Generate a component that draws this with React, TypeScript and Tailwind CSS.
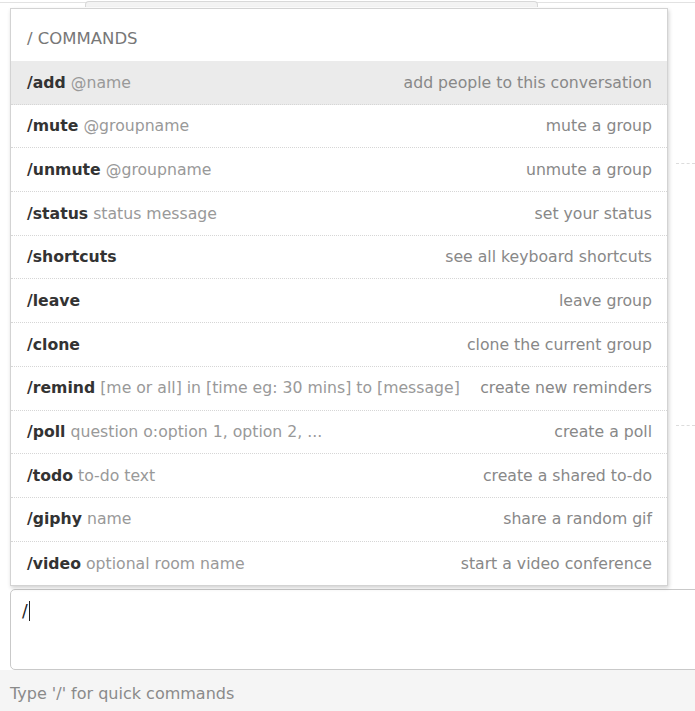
const COMMANDS: { name: string; args: string; desc: string }[] = [
  { name: "/add", args: "@name", desc: "add people to this conversation" },
  { name: "/mute", args: "@groupname", desc: "mute a group" },
  { name: "/unmute", args: "@groupname", desc: "unmute a group" },
  { name: "/status", args: "status message", desc: "set your status" },
  { name: "/shortcuts", args: "", desc: "see all keyboard shortcuts" },
  { name: "/leave", args: "", desc: "leave group" },
  { name: "/clone", args: "", desc: "clone the current group" },
  { name: "/remind", args: "[me or all] in [time eg: 30 mins] to [message]", desc: "create new reminders" },
  { name: "/poll", args: "question o:option 1, option 2, ...", desc: "create a poll" },
  { name: "/todo", args: "to-do text", desc: "create a shared to-do" },
  { name: "/giphy", args: "name", desc: "share a random gif" },
  { name: "/video", args: "optional room name", desc: "start a video conference" },
];

export default function App() {
  const active = 0;

  return (
    <div className="relative w-[695px] h-[711px] overflow-hidden bg-white font-['DejaVu_Sans',sans-serif]">
      <div className="flex flex-col h-full">
        {/* tab strip behind the menu */}
        <div className="h-[8px] border-t border-[#e2e2e2] mt-[2px]">
          <div className="ml-[85px] w-[453px] h-[6px] -mt-[2px] bg-[#f3f3f3] border-t border-l border-r border-[#d8d8d8] rounded-t-[4px]" />
        </div>

        {/* message area */}
        <div className="flex-1 flex flex-col">
          <div className="h-[153px]" />
          <div className="border-t border-dashed border-[#dcdcdc] ml-[676px]" />
          <div className="h-[261px]" />
          <div className="border-t border-dashed border-[#dcdcdc] ml-[676px]" />
        </div>

        {/* composer */}
        <div className="ml-[10px] w-[700px] h-[81px] border border-[#c9c9c9] rounded-[5px] bg-white px-[11px] pt-[10px]">
          <span className="text-[17px] text-[#222] leading-[22px]">/</span>
          <span className="inline-block w-[1px] h-[20px] bg-[#222] align-[-4px] ml-[1px]" />
        </div>
        <div className="h-[41px] bg-[#f5f5f5] px-[10px] pt-[14px] text-[16px] text-[#8a8a8a] leading-[20px]">
          Type '/' for quick commands
        </div>
      </div>

      {/* command menu */}
      <div className="absolute left-[10px] top-[8px] w-[658px] bg-white border border-[#d3d3d3] shadow-[1px_2px_4px_rgba(0,0,0,0.18)]">
        <div className="h-[52px] pl-[16px] pt-[20px] text-[16.5px] leading-[20px] text-[#777]">/ COMMANDS</div>
        {COMMANDS.map((c, i) => (
          <div
            key={c.name}
            className={`h-[43.7px] flex items-center justify-between pl-[16px] pr-[15px] text-[15.7px] border-b border-dotted border-[#d6d6d6] last:border-b-0 ${
              i === active ? "bg-[#ebebeb]" : "bg-white"
            }`}
          >
            <div className="whitespace-nowrap">
              <span className="font-bold text-[#333]">{c.name}</span>
              {c.args && <span className="text-[#999]"> {c.args}</span>}
            </div>
            <div className="whitespace-nowrap text-[#888]">{c.desc}</div>
          </div>
        ))}
      </div>
    </div>
  );
}
